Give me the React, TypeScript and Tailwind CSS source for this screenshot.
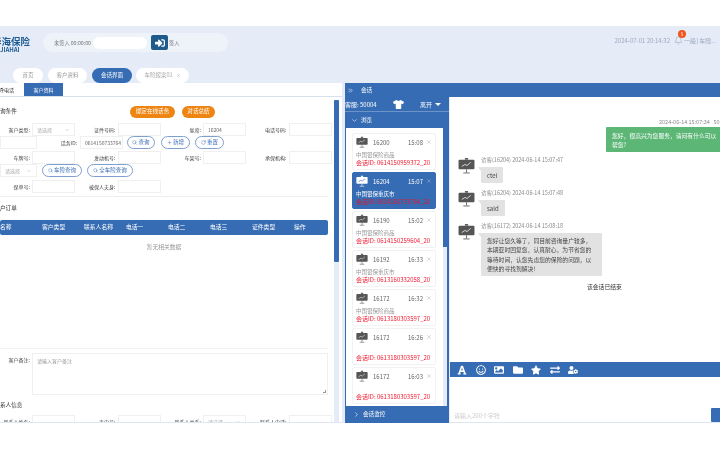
import { FC, ReactNode } from "react";
import { Bell, ChevronDown, ChevronRight, ChevronsRight, RotateCw, Search, Plus, X } from "lucide-react";
import { FaExchangeAlt, FaFolder, FaFont, FaImage, FaRegSmile, FaSignInAlt, FaStar, FaTshirt, FaUserCog } from "react-icons/fa";

const Board: FC<{ light?: boolean, className?: string }> = ({ light = false, className = "w-[16px] h-[16px]" }) => {
	const fill = light ? "#ffffff" : "#555555";
	const line = light ? "#3a6db5" : "#e8e8e8";
	return <svg viewBox="0 0 32 32" className={className + " shrink-0"}>
		<rect x="1" y="5" width="30" height="18" rx="2" fill={fill} />
		<rect x="13" y="2" width="6" height="3" fill={fill} />
		<path d="M7 18 L13 14 L17 16 L24 10" stroke={line} strokeWidth="1.6" fill="none" />
		<path d="M16 23 V29 M10 30 H22" stroke={fill} strokeWidth="1.6" fill="none" />
	</svg>
}

const Field: FC<{ label: string, value?: string, select?: boolean, muted?: boolean, width?: string }> = ({ label, value, select, muted, width = "w-[43px]" }) => {
	return <div className="flex items-center w-[85.5px] shrink-0">
		<div className="w-[30px] mr-[2px] text-right text-[5px] text-[#444] whitespace-nowrap shrink-0">{label}</div>
		<Box value={value} select={select} muted={muted} width={width} />
	</div>
}

const Box: FC<{ value?: string, select?: boolean, muted?: boolean, width?: string }> = ({ value, select, muted, width = "w-[43px]" }) => {
	return <div className={width + " h-[13px] border border-[#f0f0f0] flex items-center justify-between px-[4px] text-[5px] shrink-0 " + (muted ? "text-[#aaa]" : "text-[#666]")}>
		<span className="whitespace-nowrap">{value}</span>
		{select && <ChevronDown size={6} color="#bbb" />}
	</div>
}

const OutlineBtn: FC<{ icon: ReactNode, children: ReactNode, className: string }> = ({ icon, children, className }) => {
	return <div className={className + " h-[13px] rounded-full border border-[#7fa0cf] flex items-center justify-center gap-[1px] text-[5.5px] text-[#3a6db5] shrink-0 whitespace-nowrap"}>
		{icon}{children}
	</div>
}

const LeftPanel: FC = () => {
	const columns = ["名称", "客户类型", "联系人名称", "电话一", "电话二", "电话三", "证件类型", "操作"];
	return <div className="w-[342px] bg-white flex flex-col h-[340px] border-b border-[#dfe6f2] overflow-hidden shrink-0">
		<div className="h-[14px] flex border-b border-[#d8e0ee] shrink-0 text-[5px]">
			<div className="w-[25px] flex items-center text-[#333] -ml-[1px] whitespace-nowrap">呼电话</div>
			<div className="w-[39px] bg-[#366cb3] text-white flex items-center justify-center">客户资料</div>
		</div>
		<div className="flex flex-1 min-h-0">
			<div className="w-[328px] flex flex-col shrink-0">
				<div className="h-[26px] flex items-center shrink-0 text-[5.6px] text-[#333] pt-[3px]">
					<div className="w-[130px]">询条件</div>
					<div className="w-[45px] h-[12px] rounded-full bg-[#ee8412] text-white flex items-center justify-center">绑定在线话务</div>
					<div className="w-[33px] h-[12px] rounded-full bg-[#ee8412] text-white flex items-center justify-center ml-[7px]">对话总结</div>
				</div>
				<div className="flex h-[13px] items-center shrink-0">
					<Field label="客户类型:" value="请选择" select muted />
					<Field label="证件号码:" />
					<Field label="坐席:" value="16204" />
					<Field label="电话号码:" />
				</div>
				<div className="flex h-[13px] items-center shrink-0 mb-[2px]">
					<Box width="w-[37px]" />
					<div className="w-[40px] text-right text-[5px] text-[#444] mr-[3px]">话务ID:</div>
					<Box value="0614150733764" width="w-[43px]" />
					<OutlineBtn icon={<Search size={5} />} className="w-[28px] ml-[4px]">查询</OutlineBtn>
					<OutlineBtn icon={<Plus size={5} />} className="w-[29px] ml-[6px]">新增</OutlineBtn>
					<OutlineBtn icon={<RotateCw size={5} />} className="w-[29px] ml-[5px]">重置</OutlineBtn>
				</div>
				<div className="flex h-[13px] items-center shrink-0">
					<Field label="车牌号:" />
					<Field label="发动机号:" />
					<Field label="车架号:" />
					<Field label="承保机构:" />
				</div>
				<div className="flex h-[13px] items-center shrink-0 mb-[3px]">
					<Box width="w-[37px]" value="请选择" select muted />
					<OutlineBtn icon={<Search size={5} />} className="w-[40px] ml-[5px]">车险查询</OutlineBtn>
					<OutlineBtn icon={<Search size={5} />} className="w-[46px] ml-[5px]">全车险查询</OutlineBtn>
				</div>
				<div className="flex h-[13px] items-center shrink-0">
					<Field label="保单号:" />
					<Field label="被保人夫身:" />
				</div>
				<div className="border-t border-[#eeeeee] mt-[3px] h-[24px] flex items-center text-[5.6px] text-[#333] shrink-0">户订单</div>
				<div className="h-[15px] bg-[#366cb3] rounded-[2px] flex items-center text-[5.8px] text-white shrink-0">
					{columns.map((c) => <div key={c} className="w-[42px] whitespace-nowrap shrink-0">{c}</div>)}
				</div>
				<div className="h-[114px] border-b border-[#f3f3f3] pt-[8px] text-center text-[5.8px] text-[#999] shrink-0">暂无相关数据</div>
				<div className="flex pt-[4px] shrink-0">
					<div className="w-[30px] mr-[2px] text-right text-[5px] text-[#444] pt-[3px]">客户备注:</div>
					<div className="w-[296px] h-[42px] border border-[#f0f0f0] px-[4px] py-[3px] text-[5px] text-[#999] relative">
						请输入客户备注
						<span className="absolute right-[1px] bottom-[1px] w-[3px] h-[3px] border-r border-b border-[#999]" />
					</div>
				</div>
				<div className="h-[20px] flex items-center text-[5.6px] text-[#333] shrink-0">系人信息</div>
				<div className="flex h-[13px] items-center shrink-0">
					<Field label="联系人姓名:" />
					<Field label="表内号:" />
					<Field label="联系人关系:" value="请选择" select muted />
					<Field label="联系人电话:" />
				</div>
			</div>
			<div className="w-[5px] ml-[6px] mt-[3px] bg-[#e6ecf7] shrink-0">
				<div className="h-[162px] bg-[#366cb3] rounded-[1px]" />
			</div>
		</div>
	</div>
}

const Card: FC<{ id: string, time: string, sub?: string, session: string, active?: boolean }> = ({ id, time, sub, session, active }) => {
	return <div className={"h-[37px] mb-[2px] rounded-[2px] border px-[3px] pt-[2px] shrink-0 flex flex-col " + (active ? "bg-[#366cb3] border-[#366cb3] text-white" : "bg-white border-[#f2f2f2] text-[#666]")}>
		<div className="flex items-center text-[6px]">
			<Board light={active} className="w-[12px] h-[12px]" />
			<span className="ml-[5px] flex-1">{id}</span>
			<span className="mr-[3px]">{time}</span>
			<X size={6} strokeWidth={1} />
		</div>
		<div className={"text-[5.5px] h-[7px] leading-[7px] mt-[4px] whitespace-nowrap " + (active ? "text-white" : "text-[#999]")}>{sub}</div>
		<div className={"text-[6px] leading-[8px] whitespace-nowrap overflow-hidden " + (active ? "text-[#e3162d]" : "text-[#f0182e]")}>{session}</div>
	</div>
}

const SessionPanel: FC = () => {
	return <div className="w-[104px] bg-[#366cb3] flex flex-col h-full shrink-0 mr-[1px]">
		<div className="h-[15px] border-b border-[#6e93c8] flex items-center text-[6px] text-white shrink-0">
			<span className="whitespace-nowrap w-[48px]">客服: 50004</span>
			<FaTshirt size={11} />
			<span className="ml-[16px]">离开</span>
			<span className="ml-[3px] w-0 h-0 border-l-[3px] border-r-[3px] border-t-[3px] border-l-transparent border-r-transparent border-t-white" />
		</div>
		<div className="h-[16px] flex items-center pl-[6px] gap-[3px] text-[5.6px] text-white shrink-0">
			<ChevronDown size={7} /> 浏览
		</div>
		<div className="flex-1 min-h-0 flex ml-[1px] overflow-hidden">
			<div className="w-[97px] bg-white pl-[6px] pr-[7px] pt-[5px] overflow-hidden shrink-0">
				<Card id="16200" time="15:08" sub="中国银保险商品" session="会话ID: 0614150959372_20" />
				<Card id="16204" time="15:07" sub="中国银保重庆市" session="会话ID: 0614150733764_20" active />
				<Card id="16190" time="15:02" sub="中国银保险商品" session="会话ID: 0614150259604_20" />
				<Card id="16192" time="16:33" sub="中国银保重庆市" session="会话ID: 0613160332058_20" />
				<Card id="16172" time="16:32" sub="中国银保险商品" session="会话ID: 0613180303597_20" />
				<Card id="16172" time="16:26" session="会话ID: 0613180303597_20" />
				<Card id="16172" time="16:03" session="会话ID: 0613180303597_20" />
			</div>
			<div className="w-[4px] bg-[#e6ecf7] shrink-0">
				<div className="h-[119px] bg-[#366cb3]" />
			</div>
		</div>
		<div className="h-[17px] flex items-center pl-[8px] gap-[3px] text-[5.6px] text-white shrink-0">
			<ChevronRight size={7} /> 会话监控
		</div>
	</div>
}

const Avatar: FC = () => <div className="w-[23px] pl-[8px] shrink-0"><Board className="w-[17px] h-[17px]" /></div>

const Incoming: FC<{ head: string, children: ReactNode, wide?: boolean }> = ({ head, children, wide }) => {
	return <div className="flex mb-[7px]">
		<Avatar />
		<div className="ml-[8px]">
			<div className="text-[5.5px] leading-[7px] text-[#8a8a8a] h-[7px] whitespace-nowrap">{head}</div>
			<div className={"mt-[3px] bg-[#e2e2e2] rounded-[1px] text-[#444] relative " + (wide ? "w-[121px] h-[43px] px-[6px] py-[3px] text-[5.8px] leading-[9.3px]" : "w-fit h-[16px] px-[6px] flex items-center text-[6px]")}>
				<span className="absolute -left-[3px] top-0 w-0 h-0 border-t-[4px] border-l-[3px] border-t-[#e2e2e2] border-l-transparent" />
				{children}
			</div>
		</div>
	</div>
}

const toolIcons = [
	<FaFont size={10} />,
	<FaRegSmile size={10} />,
	<FaImage size={10} />,
	<FaFolder size={10} />,
	<FaStar size={10} />,
	<FaExchangeAlt size={10} />,
	<FaUserCog size={10} />,
];

const ChatPanel: FC = () => {
	return <div className="flex-1 min-w-0 bg-white flex flex-col h-full">
		<div className="flex-1 min-h-0 flex flex-col pt-[20px] overflow-hidden">
			<div className="text-[5.5px] leading-[10px] text-[#8a8a8a] whitespace-nowrap h-[10px] pl-[209px]">2024-06-14 15:07:34 &nbsp; 50004</div>
			<div className="self-end w-[114px] h-[25px] bg-[#5cb776] rounded-l-[1px] text-white text-[5.8px] leading-[9px] pl-[6px] pr-[3px] py-[4px] mb-[5px]">您好，很高兴为您服务，请问有什么可以帮您?</div>
			<Incoming head="访客(16204)  2024-06-14 15:07:47">ctel</Incoming>
			<Incoming head="访客(16204)  2024-06-14 15:07:48">sald</Incoming>
			<Incoming head="访客(16172)  2024-06-14 15:08:18" wide>您好让您久等了，同目前咨询量广较多，本期亚时回复您，认真耐心，为节省您的等待时间，认您先虑您的保险的问题，以便快的寻找到解决!</Incoming>
			<div className="text-[5.8px] text-[#333] pl-[137px] whitespace-nowrap">该会话已结束</div>
		</div>
		<div className="h-[15px] bg-[#366cb3] flex items-center text-white pl-[3px] shrink-0">
			{toolIcons.map((icon, i) => <div key={i} className="w-[18.5px] flex justify-center">{icon}</div>)}
		</div>
		<div className="h-[46px] flex items-end pl-[4px] border-b border-[#dfe6f2] shrink-0">
			<span className="text-[6px] text-[#cccccc] pb-[2px] flex-1">请输入200个字符</span>
			<div className="w-[9px] h-[14px] bg-[#366cb3] rounded-l-[1px]" />
		</div>
	</div>
}

export default function App() {
	const tabs = ["首页", "客户资料"];
	return <div className="w-[720px] h-[450px] bg-white overflow-hidden flex flex-col blur-[0.5px]" style={{ fontFamily: '"Noto Sans CJK SC", "Liberation Sans", sans-serif' }}>
		<div className="h-[26px] shrink-0" />
		<div className="h-[42px] bg-[#e6ecf7] flex items-start shrink-0 pt-[9px]">
			<div className="w-[43px] overflow-hidden shrink-0">
				<div className="-ml-[8px] text-[9.5px] leading-[12px] font-bold text-[#1d5c94] whitespace-nowrap">华海保险</div>
				<div className="text-[6px] leading-[5px] font-bold text-[#1d5c94] whitespace-nowrap">JIAHAI</div>
			</div>
			<div className="w-[185px] h-[19px] -mt-[2px] rounded-full bg-[#eef2f9] flex items-center pl-[11px] text-[5.2px] text-[#777] shrink-0">
				<span className="w-[39px] whitespace-nowrap">未签入 00:00:00</span>
				<div className="w-[54px] h-[12px] rounded-full bg-white" />
				<div className="w-[17px] h-[15px] ml-[4px] rounded-[2px] bg-[#1e5a8a] flex items-center justify-center text-white"><FaSignInAlt size={10} /></div>
				<span className="ml-[1px]">签入</span>
			</div>
			<div className="flex-1 flex items-center justify-end pt-[1px] text-[6px] text-[#9aa8c0] pr-[4px] whitespace-nowrap">
				<span>2024-07-01 20:14:32</span>
				<div className="relative ml-[4px]">
					<Bell size={9} strokeWidth={1.2} color="#8796b0" />
					<span className="absolute -top-[6px] left-[4px] w-[8px] h-[8px] rounded-full bg-[#f0561d] text-white text-[4.5px] flex items-center justify-center">5</span>
				</div>
				<span className="ml-[1px] w-[32px] overflow-hidden">一般] 车险...</span>
			</div>
		</div>
		<div className="h-[15px] bg-[#e6ecf7] flex items-center pl-[13px] gap-[5px] text-[5.5px] shrink-0">
			{tabs.map((t, i) => <div key={t} className={(i === 0 ? "w-[30px]" : "w-[39px]") + " h-[15px] rounded-full bg-white text-[#999] flex items-center justify-center"}>{t}</div>)}
			<div className="w-[40px] h-[15px] rounded-full bg-[#366cb3] text-white flex items-center justify-center">会话界面</div>
			<div className="w-[53px] h-[15px] rounded-full bg-white text-[#aaa] flex items-center justify-center gap-[3px] ml-[-1px]">车险报案01 <X size={5} /></div>
		</div>
		<div className="flex h-[340px] bg-[#e6ecf7] shrink-0">
			<LeftPanel />
			<div className="w-[3px] shrink-0" />
			<div className="flex-1 min-w-0 flex flex-col h-full">
				<div className="h-[14px] bg-[#366cb3] flex items-center pl-[2px] gap-[7px] text-[5.6px] text-white shrink-0">
					<ChevronsRight size={7} />
					<span>会话</span>
				</div>
				<div className="flex-1 min-h-0 flex">
					<SessionPanel />
					<ChatPanel />
				</div>
			</div>
		</div>
	</div>
}
